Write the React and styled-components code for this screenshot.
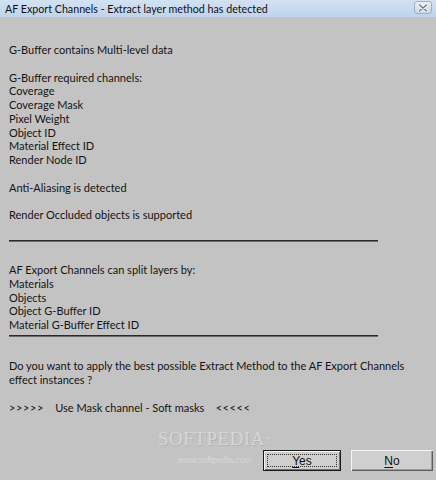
import React from "react";
import styled, { createGlobalStyle } from "styled-components";

const Global = createGlobalStyle`
  html, body { margin: 0; padding: 0; background: #c3c3c3; }
  body { width: 436px; height: 480px; overflow: hidden; }
`;

const Window = styled.div`
  position: relative;
  width: 436px;
  height: 480px;
  background: #c3c3c3;
  display: flex;
  flex-direction: column;
  font-family: Lato, "Noto Sans", sans-serif;
  color: #141414;
`;

const TitleBar = styled.div`
  height: 17px;
  flex: none;
  display: flex;
  align-items: center;
  justify-content: space-between;
  padding: 0 4px 0 5px;
  background: linear-gradient(#d2e2f3, #bfd3ea);
`;

const Title = styled.span`
  font-size: 10.7px;
  line-height: 17px;
  color: #111;
  white-space: nowrap;
`;

const CloseBtn = styled.div`
  width: 18px;
  height: 13px;
  margin-top: -2px;
  border: 1px solid #9fb0c4;
  border-radius: 3px;
  background: linear-gradient(#e9eff6, #c9d6e5);
  display: flex;
  align-items: center;
  justify-content: center;
  box-sizing: border-box;
`;

const Content = styled.div`
  padding: 26px 0 0 9px;
  display: flex;
  flex-direction: column;
  font-size: 11px;
`;

const Line = styled.div`
  height: 13.75px;
  line-height: 13.75px;
  white-space: pre;
`;

const Arrows = styled.span`
  letter-spacing: 0.6px;
`;

const Separator = styled.div`
  height: 13.75px;
  position: relative;
  &::after {
    content: "";
    position: absolute;
    left: 0;
    width: 369px;
    top: ${(p) => p.$offset}px;
    height: 2px;
    background: linear-gradient(#2a2a2a 50%, #6a6a6a 50%);
  }
`;

const Footer = styled.div`
  margin-top: auto;
  padding: 0 3px 9px 0;
  display: flex;
  justify-content: flex-end;
  gap: 10px;
`;

const Button = styled.button`
  width: ${(p) => p.$w}px;
  height: 21px;
  box-sizing: border-box;
  margin: 0;
  padding: 0;
  background: #cfcfcf;
  font-family: "Liberation Sans", Arial, sans-serif;
  font-size: 12px;
  color: #111;
  position: relative;
  border: none;
  box-shadow: ${(p) =>
    p.$default
      ? "inset 0 0 0 1px #1a1a1a, inset 1px 1px 0 1px #f4f4f4, inset -1px -1px 0 1px #707070"
      : "inset 1px 1px 0 0 #f4f4f4, inset -1px -1px 0 0 #5e5e5e, inset -2px -2px 0 0 #9a9a9a"};
  ${(p) =>
    p.$default &&
    `&::after {
      content: "";
      position: absolute;
      inset: 4px;
      border: 1px dotted #333;
    }`}
  u { text-decoration: underline; text-underline-offset: 2px; }
`;

const Watermark = styled.div`
  position: absolute;
  left: 158px;
  top: 428px;
  display: flex;
  flex-direction: column;
  align-items: center;
  pointer-events: none;
`;

const WmBig = styled.div`
  font-family: "Liberation Serif", "Times New Roman", serif;
  font-size: 19px;
  letter-spacing: 0.5px;
  color: #d6d6d6;
  text-shadow: 1px 1px 0 #b4b4b4;
  line-height: 22px;
  sup { font-size: 6px; vertical-align: top; }
`;

const WmSmall = styled.div`
  font-family: "Liberation Sans Narrow", "Liberation Sans", sans-serif;
  font-size: 9px;
  color: #d8d8d8;
  margin-top: 5px;
  letter-spacing: -0.2px;
`;

const items = [
  "G-Buffer contains Multi-level data",
  "",
  "G-Buffer required channels:",
  "Coverage",
  "Coverage Mask",
  "Pixel Weight",
  "Object ID",
  "Material Effect ID",
  "Render Node ID",
  "",
  "Anti-Aliasing is detected",
  "",
  "Render Occluded objects is supported",
  "",
  { sep: 4 },
  "",
  "AF Export Channels can split layers by:",
  "Materials",
  "Objects",
  "Object G-Buffer ID",
  "Material G-Buffer Effect ID",
  { sep: 3 },
  "",
  "Do you want to apply the best possible Extract Method to the AF Export Channels",
  "effect instances ?",
  "",
  { arrows: "Use Mask channel - Soft masks" },
];

export default function App() {
  return (
    <>
      <Global />
      <Window>
        <TitleBar>
          <Title>AF Export Channels - Extract layer method has detected</Title>
          <CloseBtn>
            <svg width="10" height="8" viewBox="0 0 10 8">
              <path d="M1.5 1 L8.5 7 M8.5 1 L1.5 7" stroke="#fff" strokeWidth="3.2" strokeLinecap="round" />
              <path d="M1.5 1 L8.5 7 M8.5 1 L1.5 7" stroke="#6d7886" strokeWidth="1.6" strokeLinecap="round" />
            </svg>
          </CloseBtn>
        </TitleBar>
        <Content>
          {items.map((it, i) =>
            typeof it === "string" ? (
              <Line key={i}>{it || "\u00a0"}</Line>
            ) : it.arrows ? (
              <Line key={i}>
                <Arrows>{">>>>>"}</Arrows>
                {"    " + it.arrows + "    "}
                <Arrows>{"<<<<<"}</Arrows>
              </Line>
            ) : (
              <Separator key={i} $offset={it.sep} />
            )
          )}
        </Content>
        <Footer>
          <Button $w={78} $default>
            <u>Y</u>es
          </Button>
          <Button $w={82}>
            <u>N</u>o
          </Button>
        </Footer>
        <Watermark>
          <WmBig>
            SOFTPEDIA<sup>™</sup>
          </WmBig>
          <WmSmall>www.softpedia.com</WmSmall>
        </Watermark>
      </Window>
    </>
  );
}
